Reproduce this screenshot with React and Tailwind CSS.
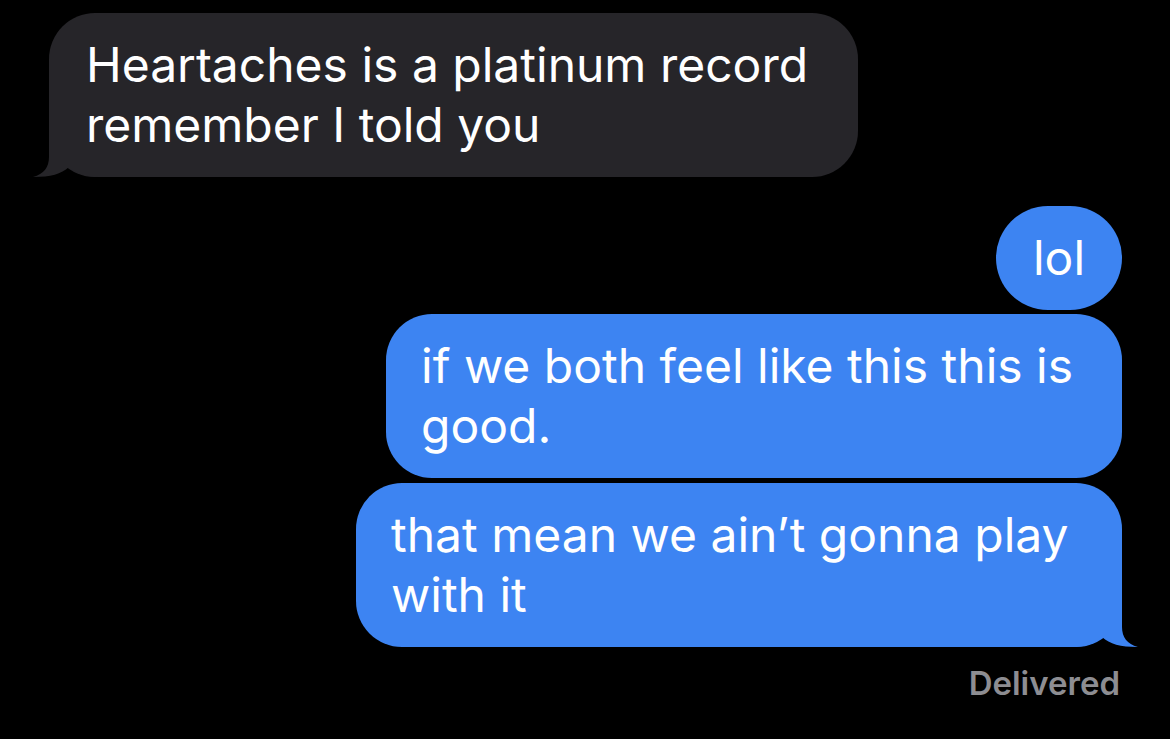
import React from 'react'

const BLUE = '#3d84f2'
const GRAY = '#262529'

// iMessage-style tail that fills the bottom corner of a bubble
const Tail = ({ color, side }) => (
  <svg
    className={
      side === 'right'
        ? 'absolute bottom-0 right-[-16px] w-[66px] h-[50px]'
        : 'absolute bottom-0 left-[-16px] w-[66px] h-[50px] -scale-x-100'
    }
    viewBox="-50 -50 66 50"
  >
    <path
      d="M -50 0 C -36 0 -26 -4 -20 -10 C -12 -3 -2 0 16 0 C 5 -3 0 -10 0 -20 L 0 -50 L -50 -50 Z"
      fill={color}
    />
  </svg>
)

const Bubble = ({ lines, me, width, tail, className = '' }) => (
  <div
    className={`relative rounded-[46px] px-[35px] py-[22px] text-white text-[48px] leading-[60px] ${className}`}
    style={{ width, backgroundColor: me ? BLUE : GRAY }}
  >
    {lines.map((l) => (
      <div key={l} className="whitespace-nowrap relative z-10">{l}</div>
    ))}
    {tail && <Tail color={me ? BLUE : GRAY} side={me ? 'right' : 'left'} />}
  </div>
)

export default function App() {
  return (
    <div className="w-[1170px] h-[739px] bg-black overflow-hidden flex flex-col font-['Inter',sans-serif] pt-[13px]">
      <Bubble
        className="ml-[49px] pl-[37px]"
        width={809}
        tail
        lines={['Heartaches is a platinum record', 'remember I told you']}
      />
      <div className="flex flex-col items-end pr-[48px] mt-[29px]">
        <div
          className="rounded-full h-[104px] w-[126px] flex items-center justify-center text-white text-[48px]"
          style={{ backgroundColor: BLUE }}
        >
          lol
        </div>
        <Bubble me className="mt-[4px]" width={736} lines={['if we both feel like this this is', 'good.']} />
        <Bubble me className="mt-[5px]" width={766} tail lines={['that mean we ain’t gonna play', 'with it']} />
        <div className="mt-[16px] mr-[2px] text-[33px] leading-[40px] font-semibold text-[#8d8d92]">
          Delivered
        </div>
      </div>
    </div>
  )
}
